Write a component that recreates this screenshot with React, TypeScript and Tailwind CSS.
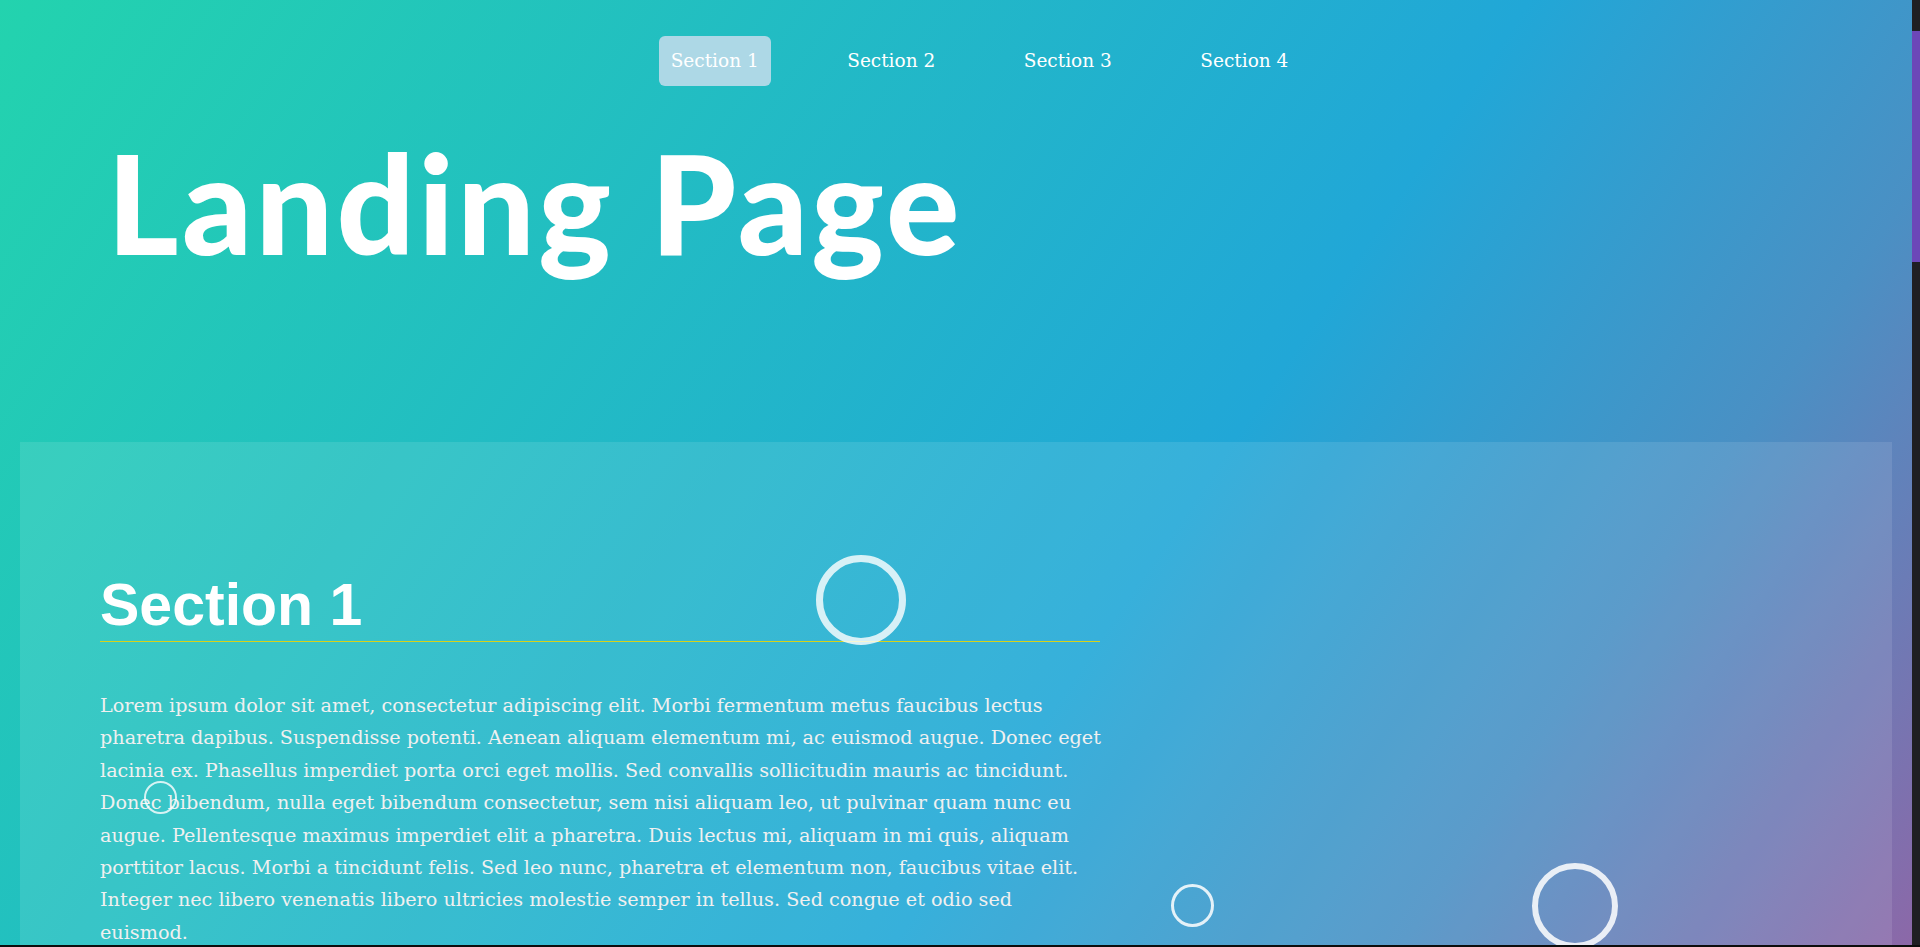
import React from "react";

const serif = "font-['DejaVu_Serif',serif]";

export default function App() {
  const navItems = ["Section 1", "Section 2", "Section 3", "Section 4"];
  return (
    <div className="w-[1920px] h-[947px] overflow-hidden flex flex-col bg-[#0d0d0d]">
      <div className="flex h-[945px]">
        <div className="relative flex-1 overflow-hidden flex flex-col bg-[linear-gradient(124deg,#23d3ae_0%,#21a7d7_60%,#4a90c4_80%,#8c68a8_100%)]">
          <nav className="pt-9 pl-[47px] flex justify-center">
            <ul className="flex gap-[64.5px]">
              {navItems.map((t, i) => (
                <li
                  key={t}
                  className={`${serif} text-[18.5px] leading-[26px] text-white px-3 py-3 rounded-md ${i === 0 ? "bg-[#add8e6]" : ""}`}
                >
                  {t}
                </li>
              ))}
            </ul>
          </nav>
          <h1 className="mt-[48px] pl-[107px] font-['Lato',sans-serif] font-black text-[137px] leading-none tracking-[3.4px] text-white">
            Landing Page
          </h1>
          <section className="mx-5 mt-[171px] flex-1 bg-white/10 pl-[80px] pt-[127px]">
            <div className="w-[1000px]">
              <h2 className="font-['Liberation_Sans',Arial,sans-serif] font-bold text-[59px] leading-[72px] text-white border-b border-[#d6d21a]">
                Section 1
              </h2>
              <p className={`${serif} mt-[48px] text-[19.2px] leading-[32.4px] text-[#f0f0f0] whitespace-nowrap`}>
                Lorem ipsum dolor sit amet, consectetur adipiscing elit. Morbi fermentum metus faucibus lectus
                <br />
                pharetra dapibus. Suspendisse potenti. Aenean aliquam elementum mi, ac euismod augue. Donec eget
                <br />
                lacinia ex. Phasellus imperdiet porta orci eget mollis. Sed convallis sollicitudin mauris ac tincidunt.
                <br />
                Donec bibendum, nulla eget bibendum consectetur, sem nisi aliquam leo, ut pulvinar quam nunc eu
                <br />
                augue. Pellentesque maximus imperdiet elit a pharetra. Duis lectus mi, aliquam in mi quis, aliquam
                <br />
                porttitor lacus. Morbi a tincidunt felis. Sed leo nunc, pharetra et elementum non, faucibus vitae elit.
                <br />
                Integer nec libero venenatis libero ultricies molestie semper in tellus. Sed congue et odio sed
                <br />
                euismod.
              </p>
            </div>
          </section>
          <div className="absolute left-[816px] top-[555px] w-[90px] h-[90px] rounded-full border-[7px] border-white/80" />
          <div className="absolute left-[144px] top-[781px] w-[33px] h-[33px] rounded-full border-2 border-white/80" />
          <div className="absolute left-[1171px] top-[884px] w-[43px] h-[43px] rounded-full border-[3px] border-white/85" />
          <div className="absolute left-[1532px] top-[863px] w-[86px] h-[86px] rounded-full border-[6px] border-white/85" />
        </div>
        <div className="w-2 flex flex-col bg-[#1f1f23]">
          <div className="h-[31px]" />
          <div className="h-[231px] bg-[#6c47b8]" />
        </div>
      </div>
      <div className="h-[2px] bg-[#0d0d0d]" />
    </div>
  );
}
